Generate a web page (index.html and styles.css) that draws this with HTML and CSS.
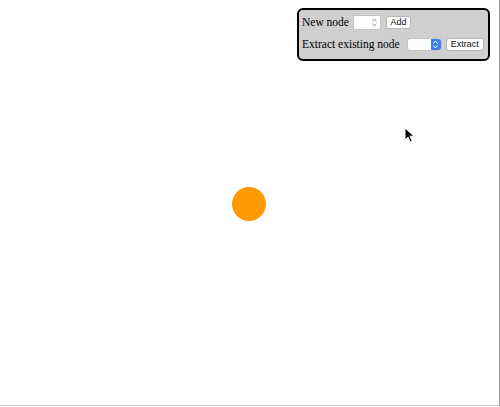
FILE: index.html
```html
<!DOCTYPE html>
<html>
<head>
<meta charset="utf-8">
<link rel="stylesheet" href="styles.css">
</head>
<body>
<div class="canvas">
  <div class="node"></div>
  <svg class="cursor" width="12" height="17" viewBox="0 0 12 17">
    <path d="M1 1 L1 13 L4 10 L6.2 15 L8.2 14.1 L6 9.2 L10 9.2 Z" fill="#000" stroke="#fff" stroke-width="1"/>
  </svg>
  <div class="panel">
    <div class="row">
      <span class="label">New node</span>
      <span class="numbox"><span class="spin"><svg width="5" height="9" viewBox="0 0 5 9"><path d="M0.5 3.5 L2.5 1 L4.5 3.5 M0.5 5.5 L2.5 8 L4.5 5.5" fill="none" stroke="#888" stroke-width="0.9"/></svg></span></span>
      <span class="btn btn-add">Add</span>
    </div>
    <div class="row">
      <span class="label">Extract existing node</span>
      <span class="select"><span class="sel-arrow"><svg width="5" height="9" viewBox="0 0 5 9"><path d="M0.5 3.5 L2.5 1 L4.5 3.5 M0.5 5.5 L2.5 8 L4.5 5.5" fill="none" stroke="#fff" stroke-width="1"/></svg></span></span>
      <span class="btn btn-extract">Extract</span>
    </div>
  </div>
</div>
</body>
</html>
```
FILE: styles.css
```css
html, body {
  margin: 0;
  padding: 0;
  background: #fff;
}
.canvas {
  position: relative;
  width: 499px;
  height: 405px;
  border-right: 1px solid #9a9a9a;
  border-bottom: 1px solid #c8c8c8;
  overflow: hidden;
}
.node {
  position: absolute;
  left: 232px;
  top: 187px;
  width: 34px;
  height: 34px;
  border-radius: 50%;
  background: #ff9900;
}
.cursor {
  position: absolute;
  left: 404px;
  top: 127px;
}
.panel {
  position: absolute;
  left: 297px;
  top: 8px;
  width: 193px;
  height: 53px;
  box-sizing: border-box;
  border: 2px solid #000;
  border-radius: 6px;
  background: #cfcfcf;
  padding: 5px 0 0 3px;
  display: flex;
  flex-direction: column;
  gap: 7px;
  font-family: "Liberation Serif", "Times New Roman", serif;
  font-size: 11.5px;
  color: #000;
}
.row {
  display: flex;
  align-items: center;
  height: 15px;
}
.label {
  white-space: nowrap;
  line-height: 15px;
}
.numbox {
  margin-left: 4px;
  width: 28px;
  height: 15px;
  box-sizing: border-box;
  background: #fff;
  border: 1px solid #c4c4c4;
  border-radius: 2px;
  display: flex;
  justify-content: flex-end;
  align-items: center;
  padding-right: 3px;
}
.spin {
  display: flex;
}
.btn {
  box-sizing: border-box;
  height: 13px;
  background: #fff;
  border: 1px solid #b5b5b5;
  border-radius: 3px;
  font-family: "Liberation Sans", Arial, sans-serif;
  font-size: 9px;
  line-height: 11px;
  text-align: center;
  color: #111;
}
.btn-add {
  margin-left: 5px;
  width: 25px;
}
.select {
  margin-left: 7px;
  width: 35px;
  height: 13px;
  box-sizing: border-box;
  background: #fff;
  border: 1px solid #c4c4c4;
  border-radius: 3px;
  display: flex;
  justify-content: flex-end;
  overflow: hidden;
}
.sel-arrow {
  width: 10px;
  height: 100%;
  background: #3b82f0;
  border-radius: 0 2px 2px 0;
  display: flex;
  align-items: center;
  justify-content: center;
}
.btn-extract {
  margin-left: 4px;
  width: 38px;
}
```
